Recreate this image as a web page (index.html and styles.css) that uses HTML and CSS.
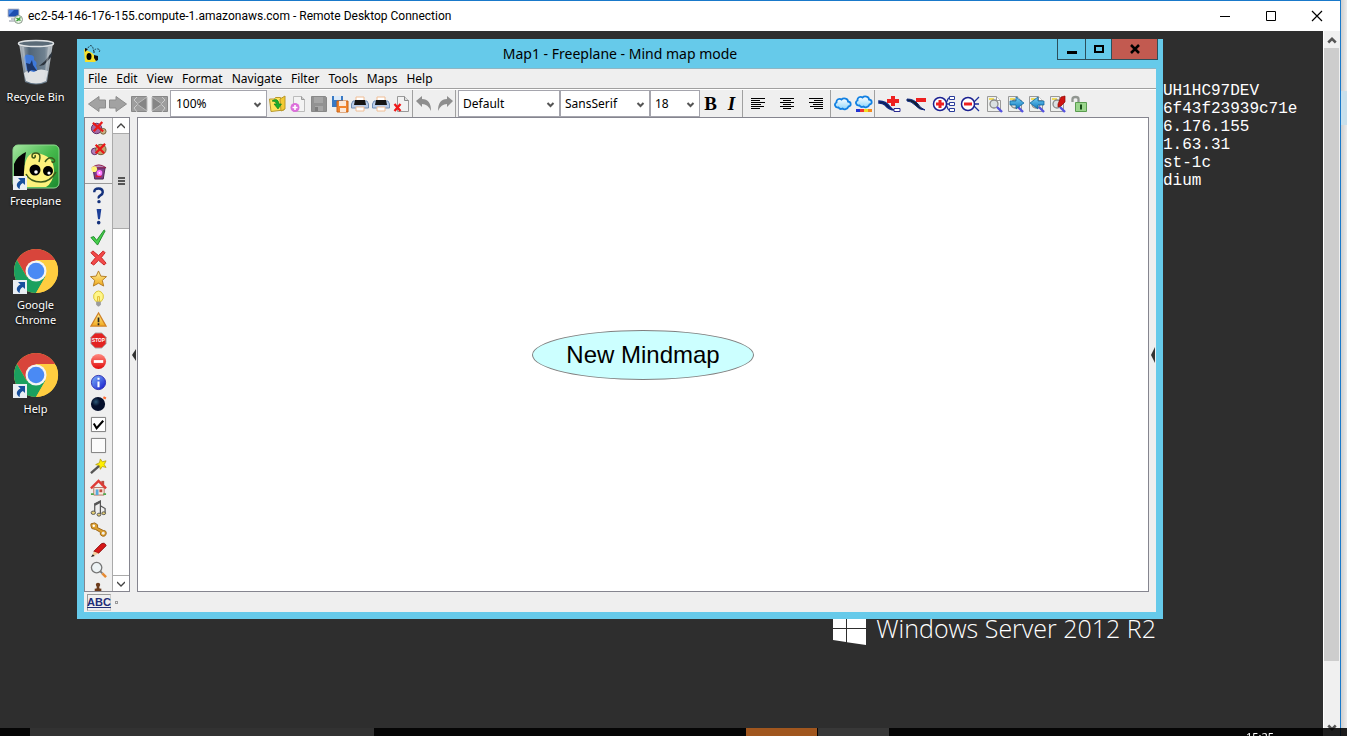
FILE: index.html
```
<!DOCTYPE html>
<html lang="en">
<head>
<meta charset="utf-8">
<title>Remote Desktop Connection</title>
<link rel="stylesheet" href="styles.css">
</head>
<body>
<svg class="defs" aria-hidden="true">
  <defs>
    <linearGradient id="gold" x2="0" y2="1"><stop offset="0" stop-color="#fff29a"/><stop offset="1" stop-color="#f0a81c"/></linearGradient>
    <linearGradient id="blue" x2="1" y2="1"><stop offset="0" stop-color="#7db9ff"/><stop offset="1" stop-color="#1313c8"/></linearGradient>
    <linearGradient id="red" x2="0" y2="1"><stop offset="0" stop-color="#ff8a80"/><stop offset="1" stop-color="#e00b0b"/></linearGradient>
    <linearGradient id="cyan" x2="0" y2="1"><stop offset="0" stop-color="#7ad0f5"/><stop offset="1" stop-color="#0d78bd"/></linearGradient>
    <linearGradient id="sky" x2="0" y2="1"><stop offset="0" stop-color="#ffffff"/><stop offset="1" stop-color="#8fd6fb"/></linearGradient>
    <linearGradient id="glass" x2="1"><stop offset="0" stop-color="#b9bfc4"/><stop offset=".3" stop-color="#506477"/><stop offset=".75" stop-color="#6f8190"/><stop offset="1" stop-color="#c6cacd"/></linearGradient>
    <linearGradient id="leaf" x2="1" y2="1"><stop offset="0" stop-color="#a6e6a1"/><stop offset=".5" stop-color="#45b94c"/><stop offset="1" stop-color="#1c8a2e"/></linearGradient>
    <radialGradient id="bombfill" cx=".35" cy=".35"><stop offset="0" stop-color="#2b5878"/><stop offset=".6" stop-color="#06102c"/></radialGradient>
  </defs>
  <symbol id="chev" viewBox="0 0 8 6"><path d="M1 1l3 3 3-3" fill="none" stroke="#555" stroke-width="2"/></symbol>
  <symbol id="thinup" viewBox="0 0 8 6"><path d="M0 5l4-4 4 4" fill="none" stroke="#444" stroke-width="1.3"/></symbol>
  <symbol id="printer" viewBox="0 0 18 18"><path d="M5 2h8v5H5z" fill="#fff" stroke="#f0bd94"/><path d="M2 6h14l1.500 3v4H.5V9z" fill="#b9cdea" stroke="#6f8db5"/><path d="M4 5h10l1 5H3z" fill="#151515"/><path d="M5 12h8v4H5z" fill="#fff" stroke="#f0bd94"/></symbol>
  <symbol id="pagelens" viewBox="0 0 18 18"><path d="M1.500 1.500h9l4 4v11h-13z" fill="#eef0ee" stroke="#999"/><path d="M3 3h5v2H3z" fill="#f0dc5c"/><path d="M10.500 1.500v4h4" fill="#fff" stroke="#999"/><circle cx="8" cy="9" r="4" fill="#d4dcdf" fill-opacity=".8" stroke="#8a8a8a" stroke-width="1.300"/><path d="M11 12l5 5" stroke="#5452df" stroke-width="2.400"/></symbol>
  <symbol id="cloud" viewBox="0 0 18 18"><path d="M4.500 12.500C.5 13 0 8.500 2.500 7.500 2 4.500 5.500 3 7.500 4.500 9.500 2.500 14 3.500 14 6.500c3.500.5 3.500 4.500.5 5-1 3-4.500 3.500-6 2-1.500.8-3 .5-4-1z" fill="url(#sky)" stroke="#1280e2" stroke-width="1.800"/></symbol>
  <symbol id="chrome" viewBox="0 0 48 48"><circle cx="24" cy="24" r="22" fill="#ffcd40"/><path d="M24 13h19.050A22 22 0 0 0 4.950 13L14.500 29.500z" fill="#d8453b"/><path d="M4.950 13A22 22 0 0 0 24 46l9.500-16.500H24L14.500 29.500z" fill="#1ba05f"/><path d="M24 14h19.700A22 22 0 0 1 24 46l9.500-16.500z" fill="#ffcd40"/><circle cx="24" cy="24" r="10.500" fill="#f4f4f4"/><circle cx="24" cy="24" r="8.300" fill="#4a8af4"/></symbol>
  <symbol id="short" viewBox="0 0 14 14"><path d="M0 0h14v14H0z" fill="#e9eef3"/><path d="M5 2l7 0v7L9.800 7C7 8.600 6.500 10.500 6.800 13 2.500 11 3 6.500 7.500 4.500z" fill="#174f9c"/></symbol>
</svg>

<div class="host">
  <section class="rdp">
    <header class="rdp-bar">
      <svg class="i16" viewBox="0 0 16 16"><path d="M1 1h11v8H1z" fill="#1d4fb0" stroke="#c3c7cf"/><path d="M2 2h5L2 7z" fill="#4e86e4"/><path d="M4 10h5v2H4zM2 12h8v2H2z" fill="#c5c9cf"/><circle cx="11.500" cy="11.500" r="4" fill="#e9f3e6" stroke="#8b9a8b"/><path d="M9.500 10l2 1.500-2 1.500M13.500 9.500l-2 1.500 2 1.500" fill="none" stroke="#2c9b2c" stroke-width="1.200"/></svg>
      <h1 class="rdp-title">ec2-54-146-176-155.compute-1.amazonaws.com - Remote Desktop Connection</h1>
      <div class="rdp-ctl">
        <button aria-label="Minimize"><svg viewBox="0 0 12 12"><path d="M1 6.500h10" stroke="#000"/></svg></button>
        <button aria-label="Maximize"><svg viewBox="0 0 12 12"><path d="M1.500 1.500h9v9h-9z" fill="none" stroke="#000"/></svg></button>
        <button aria-label="Close"><svg viewBox="0 0 12 12"><path d="M1 1l10 10M11 1L1 11" stroke="#000" stroke-width="1.200"/></svg></button>
      </div>
    </header>
    <div class="rdp-view">
      <main class="desktop">
        <nav class="shortcuts">
          <a href="#bin"><svg viewBox="0 0 48 48"><path d="M7 4l6 39q11 5 22 0l6-39z" fill="url(#glass)"/><path d="M12 34q5-4 11-2 6-3 13 0l-2 10q-10 5-20 0z" fill="#dfe1e3"/><path d="M12 19q1-5 6-3 5 0 4 5 4 2 2 6 3 4-2 6l-8-2-1-6z" fill="#3f79da"/><path d="M14 24l4 1 2-4 1 5 4 6-6-1-3 3z" fill="#1d3566"/><path d="M40 17l-8 9-5 1 6-5 7-9z" fill="#2c343d"/><path d="M11 8l4 32M37 8l-4 32" stroke="#d4dade" stroke-width="2" opacity=".4"/><ellipse cx="24" cy="4.500" rx="17.500" ry="3" fill="#5b6b78" stroke="#e1e4e6" stroke-width="1.500"/></svg><span>Recycle Bin</span></a>
          <a href="#freeplane"><svg viewBox="0 0 48 48"><rect y="2" x="1" width="46" height="43" rx="5" fill="url(#leaf)" stroke="#8fdc8f"/><path d="M2 21q3-8 12-12-3 14 0 29H2z" fill="#050505"/><path d="M12 44Q10 8 24 10q18 2 18 18-1 12-8 16z" fill="#fdf27c"/><circle cx="23" cy="27" r="5.500" fill="#000"/><circle cx="36" cy="28" r="5" fill="#000"/><circle cx="24" cy="29" r="1.800" fill="#fff"/><circle cx="37" cy="30" r="1.600" fill="#fff"/><path d="M14 31q4 8 15 8 9 0 15-10M27 19q3-9-3-9-4 0-4 3 0 2 2 2 2-1 1-3M33 19q3-5 7-4 4 2 2 4-2 1-2-1" fill="none" stroke="#3c5a1a" stroke-width="1.500"/><use href="#short" x="1" y="33" width="14" height="14"/></svg><span>Freeplane</span></a>
          <a href="#chrome-app"><svg viewBox="0 0 48 48"><use href="#chrome" width="48" height="48"/><use href="#short" x="1" y="33" width="14" height="14"/></svg><span>Google Chrome</span></a>
          <a href="#help"><svg viewBox="0 0 48 48"><use href="#chrome" width="48" height="48"/><use href="#short" x="1" y="33" width="14" height="14"/></svg><span>Help</span></a>
        </nav>

        <div class="hostinfo"><p>UH1HC97DEV</p><p>6f43f23939c71e</p><p>6.176.155</p><p>1.63.31</p><p>st-1c</p><p>dium</p></div>
        <div class="brand"><svg viewBox="0 0 33 34"><path d="M0 5l13-2v14H0zM14 3l19-3v17H14zM0 18h13v13L0 29zM14 18h19v16l-19-2.700z" fill="#fff"/></svg><span>Windows Server 2012 R2</span></div>

        <section class="win">
          <header class="win-bar">
            <svg class="bee" viewBox="0 0 18 18"><path d="M0 4l8 4 6 6-3 3H1z" fill="#f6df2a"/><path d="M1 3l3 1-3 3z" fill="#111"/><ellipse cx="5" cy="11.500" rx="2.500" ry="3.500" fill="#000"/><path d="M10 10l4 1v4l-2 1-2-3z" fill="#111"/><path d="M4 3q3-5 5 0l1 5M10 8q0-5 4-4 3 1 1 3" fill="none" stroke="#234450" stroke-dasharray="2 1"/></svg>
            <h2 class="win-title">Map1 - Freeplane - Mind map mode</h2>
            <div class="win-ctl">
              <button class="c-min" aria-label="Minimize"><svg viewBox="0 0 12 12"><path d="M1 8h10v3H1z"/></svg></button>
              <button class="c-max" aria-label="Maximize"><svg viewBox="0 0 12 12"><path d="M2 3h8v6H2z" fill="none" stroke="#000" stroke-width="2"/></svg></button>
              <button class="c-close" aria-label="Close"><svg viewBox="0 0 12 12"><path d="M2 2l8 8M10 2l-8 8" stroke="#000" stroke-width="2.500"/></svg></button>
            </div>
          </header>
          <div class="client">
            <nav class="menu"><button>File</button><button>Edit</button><button>View</button><button>Format</button><button>Navigate</button><button>Filter</button><button>Tools</button><button>Maps</button><button>Help</button></nav>
            <div class="tools">
              <div class="grp">
                <button aria-label="Previous"><svg viewBox="0 0 18 18"><path d="M.5 9L11 1.500V5h6.500v8H11v3.500z" fill="#a2a2a2" stroke="#8c8c8c"/></svg></button>
                <button aria-label="Next"><svg viewBox="0 0 18 18"><path d="M17.500 9L7 1.500V5H.5v8H7v3.500z" fill="#a2a2a2" stroke="#8c8c8c"/></svg></button>
                <button aria-label="First"><svg viewBox="0 0 18 18"><path d="M1.500 1.500h15v15h-15z" fill="#9d9d9d" stroke="#888"/><path d="M7 2L4 5l4 4-4 4 3 4" fill="none" stroke="#ccc"/><path d="M7 9l10-7v14z" fill="#858585" stroke="#bbb"/></svg></button>
                <button aria-label="Last"><svg viewBox="0 0 18 18"><path d="M1.500 1.500h15v15h-15z" fill="#9d9d9d" stroke="#888"/><path d="M11 2l3 3-4 4 4 4-3 4" fill="none" stroke="#ccc"/><path d="M11 9L1 2v14z" fill="#858585" stroke="#bbb"/></svg></button>
              </div>
              <label class="combo zoom"><select aria-label="Zoom"><option>100%</option></select><svg><use href="#chev"/></svg></label>
              <div class="grp edge io">
                <button aria-label="Open"><svg viewBox="0 0 18 18"><path d="M1.500 4h5l1-1.500h5V5h3.500v10l-13 1.500z" fill="#ffe45a" stroke="#b8972a"/><path d="M12 4l5-3v13l-4 2z" fill="#f4ca32" stroke="#b8972a"/><path d="M4 6q6-4 7 3h2.500L10 14 6 9h2.500Q8 6 4 6z" fill="#1cad2b" stroke="#0a7a1a" stroke-width=".6"/></svg></button>
                <button aria-label="New"><svg viewBox="0 0 18 18"><path d="M4.500 1.500h8l3 3v12h-11z" fill="#f3f3f3" stroke="#bbb"/><path d="M12.500 1.500v3h3" fill="#ccc" stroke="#999"/><circle cx="6" cy="12.500" r="4.500" fill="#dc6fdb"/><path d="M3.500 12.500h5M6 10v5" stroke="#fff" stroke-width="1.600"/></svg></button>
                <button aria-label="Save"><svg viewBox="0 0 18 18"><path d="M1.500 1.500h14l1 1v14h-15z" fill="#929292" stroke="#888"/><path d="M4 2h9v6H4zM5 11h8v5H5z" fill="#a6a6a6"/><path d="M5 12h3v4H5z" fill="#7d7d7d"/></svg></button>
                <button aria-label="Save as"><svg viewBox="0 0 18 18"><path d="M1 1h11v11H1z" fill="#3879c4"/><path d="M3 1h7v4H3z" fill="#dceaf8"/><path d="M6 6h11v11H6z" fill="#f2852e" stroke="#c96518"/><path d="M8 6h7v5H8zM9 13h6v4H9z" fill="#fbe8da"/></svg></button>
                <button aria-label="Print"><svg><use href="#printer"/></svg></button>
                <button aria-label="Print directly"><svg><use href="#printer"/></svg></button>
                <button aria-label="Close map"><svg viewBox="0 0 18 18"><path d="M4.500 1.500h7l4 4v11h-11z" fill="#f2f2f2" stroke="#999"/><path d="M11.500 1.500v4h4" fill="#ddd" stroke="#888"/><path d="M1.500 9l6 7M7.500 9l-6 7" stroke="#f01818" stroke-width="2.300"/></svg></button>
              </div>
              <div class="grp edge">
                <button aria-label="Undo"><svg viewBox="0 0 18 18"><path d="M1 6l6-5v3q9 0 9 12-3-7-9-7v3z" fill="#8e8e8e"/></svg></button>
                <button aria-label="Redo"><svg viewBox="0 0 18 18"><path d="M17 6l-6-5v3q-9 0-9 12 3-7 9-7v3z" fill="#8e8e8e"/></svg></button>
              </div>
              <i class="rule"></i>
              <label class="combo style"><select aria-label="Style"><option>Default</option></select><svg><use href="#chev"/></svg></label>
              <label class="combo font"><select aria-label="Font"><option>SansSerif</option></select><svg><use href="#chev"/></svg></label>
              <label class="combo size"><select aria-label="Size"><option>18</option></select><svg><use href="#chev"/></svg></label>
              <div class="grp edge"><button class="b">B</button><button class="b it">I</button></div>
              <div class="grp edge wide">
                <button aria-label="Align left"><svg viewBox="0 0 18 18"><path d="M2 3.500h14M2 5.500h9M2 7.500h14M2 9.500h10M2 11.500h13M2 13.500h9" stroke="#000"/></svg></button>
                <button aria-label="Centre"><svg viewBox="0 0 18 18"><path d="M2 3.500h14M5 5.500h8M2 7.500h14M5 9.500h8M2 11.500h14M5 13.500h8" stroke="#000"/></svg></button>
                <button aria-label="Align right"><svg viewBox="0 0 18 18"><path d="M2 3.500h14M7 5.500h9M2 7.500h14M6 9.500h10M3 11.500h13M7 13.500h9" stroke="#000"/></svg></button>
              </div>
              <div class="grp edge inset">
                <button aria-label="Cloud"><svg><use href="#cloud"/></svg></button>
                <button aria-label="Cloud colour"><svg viewBox="0 0 18 18"><use href="#cloud" y="-2" width="18" height="18"/><path d="M1 14h4v3H1z" fill="#2334d3"/><path d="M5 14h4v3H5z" fill="#e33"/><path d="M9 14h4v3H9z" fill="#f2de25"/><path d="M13 14h4v3h-4z" fill="#f58a1c"/></svg></button>
              </div>
              <div class="grp med inset">
                <button aria-label="New child"><svg viewBox="0 0 24 18"><path d="M1 6q7 0 11 6 2 3 5 3-6 0-10-5Q5 8 1 8z" fill="#123" stroke="#102880" stroke-width="1.500"/><path d="M13 1h4v3h4v4h-4v3h-4V8H9V4h4z" fill="#ee2020"/><path d="M16 13.500h6v3h-6z" fill="#fff" stroke="#2a2a90"/></svg></button>
                <button aria-label="Delete"><svg viewBox="0 0 24 18"><path d="M2 4q7 0 11 5 2 4 7 6-6 0-10-5Q6 6 2 6z" fill="#123" stroke="#102880"/><path d="M11 3h10v4H11z" fill="#ee2020"/></svg></button>
                <button aria-label="Unfold"><svg viewBox="0 0 24 18"><path d="M14 9h3M14 9q2-6 3-6h1M14 9q2 6 3 6h1" fill="none" stroke="#1c2f9c" stroke-width="1.300"/><path d="M17.500 1.500h5v3h-5zM17.500 7.500h5v3h-5zM17.500 13.500h5v3h-5z" fill="#fff" stroke="#2a3c9a"/><circle cx="8" cy="9" r="6.500" fill="#fff" stroke="#1b2090" stroke-width="1.500"/><path d="M6.500 5h3v2.500H12v3H9.500V13h-3v-2.500H4v-3h2.500z" fill="#ee2020"/></svg></button>
                <button aria-label="Fold"><svg viewBox="0 0 24 18"><path d="M14 8l6-6M14 9h6M14 10l6 6" stroke="#1c2f9c" stroke-width="1.300"/><circle cx="9" cy="9" r="6.500" fill="#fff" stroke="#1b2090" stroke-width="1.500"/><path d="M5 7.500h8v3H5z" fill="#ee2020"/></svg></button>
              </div>
              <div class="grp">
                <button aria-label="Find"><svg><use href="#pagelens"/></svg></button>
                <button aria-label="Find next"><svg viewBox="0 0 18 18"><use href="#pagelens" width="18" height="18"/><path d="M3 6h6V2l8 6-8 6v-4H3z" fill="url(#cyan)" stroke="#0a6098" stroke-width=".7"/></svg></button>
                <button aria-label="Find previous"><svg viewBox="0 0 18 18"><use href="#pagelens" width="18" height="18"/><path d="M16 6h-6V2L2 8l8 6v-4h6z" fill="url(#cyan)" stroke="#0a6098" stroke-width=".7"/></svg></button>
                <button aria-label="Find and replace"><svg viewBox="0 0 18 18"><use href="#pagelens" width="18" height="18"/><path d="M9 9l3-7 4-1v6l-4 4-3 1z" fill="#cf1310" stroke="#8e0805" stroke-width=".7"/></svg></button>
                <button aria-label="Lock"><svg viewBox="0 0 18 18"><path d="M2.500 7V4q0-2 3-2t3 2v4" fill="none" stroke="#919691" stroke-width="2.300"/><path d="M5.500 7.500h11v9h-11z" fill="#9bd68d" stroke="#5b9c50"/><path d="M10 9.500h2v5h-2z" fill="#174d17"/></svg></button>
              </div>
            </div>
            <div class="work">
              <aside class="palette">
                <div class="icons">
                  <button aria-label="Remove first icon"><svg viewBox="0 0 18 18"><circle cx="7" cy="9" r="5.500" fill="#a36aa5" stroke="#5a2a62"/><circle cx="14" cy="12" r="3" fill="#c9b487" stroke="#715b35"/><path d="M3 3l11 9M13 2L4 12" stroke="#ea1818" stroke-width="2.400"/></svg></button>
                  <button class="low" aria-label="Remove last icon"><svg viewBox="0 0 18 18"><circle cx="5" cy="11" r="3.500" fill="#b27db9" stroke="#5a2a62"/><circle cx="11.500" cy="9" r="5.500" fill="#c2a26c" stroke="#715b35"/><path d="M6 4l9 9M16 3L6 13" stroke="#ea1818" stroke-width="2.400"/></svg></button>
                  <button class="tall" aria-label="Remove all icons"><svg viewBox="0 0 18 18"><path d="M3 5h13l-2 12H5z" fill="#7d3f86" stroke="#4b2352"/><path d="M2 5q7-6 15 0z" fill="#b68abb" stroke="#8c1645"/><circle cx="4.500" cy="6.500" r="3" fill="#fff477"/><path d="M6 14h6" stroke="#db1a30" stroke-width="2"/><circle cx="10" cy="10.500" r="3" fill="#ff7bff"/><circle cx="10" cy="10.500" r="1" fill="#fff"/></svg></button>
                  <hr>
                  <button aria-label="Question"><svg viewBox="0 0 18 18"><path d="M4.500 5.500q0-4 4.500-4t4.500 4q0 2-2.500 3.300T9.500 12" fill="none" stroke="#14317c" stroke-width="2.600"/><circle cx="9.500" cy="15.500" r="1.800" fill="#14317c"/></svg></button>
                  <button aria-label="Important"><svg viewBox="0 0 18 18"><path d="M7 1h5l-1.500 11H8.500z" fill="#1c3f98"/><circle cx="9.200" cy="15.500" r="1.900" fill="#14317c"/></svg></button>
                  <button class="low" aria-label="OK"><svg viewBox="0 0 18 18"><path d="M1 9l3-1 3 4 8-11 1 1-8 15z" fill="#47cf4c" stroke="#1e8b2a"/></svg></button>
                  <button aria-label="Not OK"><svg viewBox="0 0 18 18"><path d="M1 4l2-2 6 5 5-5 2 2-4 5 5 6-2 2-6-5-5 5-3-2 5-6z" fill="#f24a4a" stroke="#c52222"/></svg></button>
                  <button class="low" aria-label="Excellent"><svg viewBox="0 0 18 18"><path d="M9 1l2.500 5.500 6 .5-4.500 4 1.500 6L9 14l-5.500 3L5 11 .5 7l6-.5z" fill="url(#gold)" stroke="#b37a22"/></svg></button>
                  <button aria-label="Idea"><svg viewBox="0 0 18 18"><path d="M6 12Q3 9 4 5q2-4 5-4t5 4q1 4-2 7z" fill="#fff68a" stroke="#d9c432"/><path d="M8 12V7h2v5" fill="none" stroke="#e0b92c"/><path d="M6.500 12.500h5v3l-2 2h-1l-2-2z" fill="#9b9b9b"/></svg></button>
                  <button aria-label="Warning"><svg viewBox="0 0 18 18"><path d="M9 2l8 14H1z" fill="url(#gold)" stroke="#d18226" stroke-width="1.300"/><path d="M9 7v5M9 13v2" stroke="#222" stroke-width="1.800"/></svg></button>
                  <button aria-label="Stop"><svg viewBox="0 0 18 18"><path d="M5.500 1h7L17 5.500v7L12.500 17h-7L1 12.500v-7z" fill="#e32222" stroke="#aaa"/><text x="9" y="11" class="stop">STOP</text></svg></button>
                  <button aria-label="No entry"><svg viewBox="0 0 18 18"><circle cx="9" cy="9" r="8" fill="url(#red)"/><path d="M4 7.500h10v3H4z" fill="#fff"/></svg></button>
                  <button aria-label="Information"><svg viewBox="0 0 18 18"><circle cx="9" cy="9" r="7.500" fill="url(#blue)" stroke="#2c2cb0"/><path d="M9 8v6M9 4v2.200" stroke="#fff" stroke-width="2.200"/></svg></button>
                  <button aria-label="Bomb"><svg viewBox="0 0 18 18"><circle cx="8.500" cy="9.500" r="7.500" fill="url(#bombfill)"/><path d="M15 4l1-2" stroke="#ff6a32" stroke-width="3"/></svg></button>
                  <button aria-label="Checked"><svg viewBox="0 0 18 18"><path d="M1.500 1.500h15v15h-15z" fill="#fff" stroke="#777"/><path d="M4 8l3 5 7-8" fill="none" stroke="#000" stroke-width="2.200"/></svg></button>
                  <button aria-label="Unchecked"><svg viewBox="0 0 18 18"><path d="M1.500 1.500h15v15h-15z" fill="#fbfbfb" stroke="#777"/></svg></button>
                  <button aria-label="Magic"><svg viewBox="0 0 18 18"><path d="M1 16l9-8" stroke="#555" stroke-width="2.500"/><path d="M11 1l2 3 4-1-2 4 2 3-4-1-2 3-1-4-4-1 4-2z" fill="#fff000" stroke="#b09a10" stroke-width=".8"/></svg></button>
                  <button aria-label="Home"><svg viewBox="0 0 18 18"><path d="M4 9h11v8H4z" fill="#f9e9dd" stroke="#b57464"/><path d="M12 2h3v5h-3z" fill="#b64f44"/><path d="M1 10l8-8 8 8" fill="none" stroke="#de3b36" stroke-width="2.500"/><path d="M6 11h3v6H6z" fill="#57a9dd"/><path d="M10 11h3v3h-3z" fill="#c24b3f"/><path d="M1 16h3M14 16h3" stroke="#49a849" stroke-width="2"/></svg></button>
                  <button aria-label="Music"><svg viewBox="0 0 18 18"><path d="M5 13V4l6-3v9M11 6l5 3v5M11 6v9" fill="none" stroke="#555" stroke-width="1.300"/><path d="M5 5l6-3" stroke="#555" stroke-width="2.200"/><ellipse cx="3.500" cy="13.500" rx="2.300" ry="1.800" fill="#e5cf74" stroke="#555"/><ellipse cx="9.500" cy="15.500" rx="2" ry="1.600" fill="#e5cf74" stroke="#555"/><ellipse cx="14.500" cy="14" rx="2" ry="1.500" fill="#e5cf74" stroke="#555"/></svg></button>
                  <button class="low" aria-label="Key"><svg viewBox="0 0 18 18"><path d="M1 3l4-1 3 2v3l6 3q4 0 3 4-1 3-4 2-3-1-2-4L6 9 2 8 1 5z" fill="#dda02f" stroke="#9c6414"/><circle cx="4" cy="5" r="1.300" fill="#fff"/><circle cx="14" cy="13" r="1.500" fill="#efefef"/></svg></button>
                  <button class="low" aria-label="Pencil"><svg viewBox="0 0 18 18"><path d="M4 11l8-8q4-2 5 2l-8 8z" fill="#d71717" stroke="#8c0b0b"/><path d="M4 11l5 2-7 4z" fill="#f5cf9c"/><path d="M1 17l2-3 2 2z" fill="#222"/></svg></button>
                  <button aria-label="Magnifier"><svg viewBox="0 0 18 18"><circle cx="7" cy="7" r="5.500" fill="#edf3f5" stroke="#777" stroke-width="1.400"/><path d="M11 11l2 2" stroke="#777" stroke-width="2"/><path d="M13 13l4 4" stroke="#e58a33" stroke-width="2.700"/></svg></button>
                  <button aria-label="Chess"><svg viewBox="0 0 18 18"><circle cx="8.500" cy="3" r="2.300" fill="#6d3c1d"/><path d="M7.500 4h2l1 5h-4z" fill="#6d3c1d"/><path d="M5 7h7v3H5z" fill="#6d3c1d"/></svg></button>
                </div>
                <div class="track">
                  <button aria-label="Scroll up"><svg><use href="#thinup"/></svg></button>
                  <div class="thumb"><i></i><i></i><i></i></div>
                  <button class="down" aria-label="Scroll down"><svg class="flip"><use href="#thinup"/></svg></button>
                </div>
              </aside>
              <button class="split" aria-label="Toggle icon bar"><svg viewBox="0 0 4 14"><path d="M4 1v12L0 7z" fill="#333"/></svg></button>
              <div class="canvas"><div class="node">New Mindmap</div></div>
              <button class="split right" aria-label="Toggle side panel"><svg viewBox="0 0 4 18"><path d="M4 1v16L0 9z" fill="#333"/></svg></button>
            </div>
            <footer class="status"><button class="abc">ABC</button><i></i></footer>
          </div>
        </section>
      </main>
      <div class="scroll">
        <button aria-label="Scroll up"><svg><use href="#chev"/></svg></button>
        <div class="bar"></div>
        <button class="down" aria-label="Scroll down"><svg><use href="#chev"/></svg></button>
      </div>
    </div>
  </section>
  <div class="behind"><i></i></div>
</div>
<footer class="taskbar"><i class="t1"></i><i class="t2"></i><i class="t3"></i><time>15:25</time></footer>
</body>
</html>
```
FILE: styles.css
```
* { box-sizing: border-box; }
body { margin: 0; font: 12px/16px "Noto Sans", sans-serif; overflow: hidden; color: #000; }
button { display: flex; align-items: center; justify-content: center; margin: 0; padding: 0; border: 0; background: none; font: inherit; color: inherit; }
h1, h2, p { margin: 0; font-weight: 400; }
.defs { position: absolute; width: 0; height: 0; }

.host { display: flex; height: 100vh; }
.rdp { flex: 1; display: flex; flex-direction: column; min-width: 0; border-top: 1px solid #1979ca; border-right: 1px solid #1979ca; background: #fff; }
.rdp-bar { display: flex; align-items: center; height: 30px; padding-left: 7px; gap: 5px; }
.i16 { width: 16px; height: 16px; }
.rdp-title { flex: 1; font: 12px/16px Roboto, sans-serif; }
.rdp-ctl { display: flex; }
.rdp-ctl button { width: 46px; height: 28px; }
.rdp-ctl svg { width: 12px; height: 12px; }
.rdp-view { flex: 1; display: flex; min-height: 0; }
.behind { width: 6px; padding-top: 91px; background: linear-gradient(90deg, #cfcfcf, #ececec); }
.behind i { display: block; height: 34px; background: #c9e0ec; }

.scroll { display: flex; flex-direction: column; width: 17px; border-left: 1px solid #fff; background: #f0f0f0; }
.scroll button { height: 17px; }
.scroll svg { width: 10px; height: 8px; }
.scroll button:first-child svg { transform: rotate(180deg); }
.scroll .bar { height: 87%; margin-right: 1px; background: #cdcdcd; }
.scroll .down { margin-top: auto; }

.desktop { position: relative; flex: 1; min-width: 0; background: #2e2e2e; color: #fff; overflow: hidden; }
.shortcuts { display: flex; flex-direction: column; width: 71px; padding-top: 8px; }
.shortcuts a { display: flex; flex-direction: column; align-items: center; gap: 2px; min-height: 104px; color: #fff; text-decoration: none; text-align: center; font-size: 11px; line-height: 15px; text-shadow: 0 1px 2px #000; }
.shortcuts svg { width: 48px; height: 48px; }
.shortcuts span { padding: 0 8px; margin: 0 -8px; }
.shortcuts a:nth-child(3) span { width: 70px; }

.hostinfo { position: absolute; left: 1163px; top: 51px; font: 16px/18px "Liberation Mono", monospace; }
.brand { position: absolute; right: 167px; bottom: 91px; display: flex; align-items: center; gap: 10px; font: 300 25px/34px "Open Sans", sans-serif; }
.brand svg { width: 33px; height: 34px; }
.taskbar { position: fixed; left: 0; right: 0; bottom: 0; display: flex; height: 8px; overflow: hidden; background: rgba(0, 0, 0, .88); color: #fff; }
.taskbar i { height: 8px; }
.t1 { width: 344px; margin-left: 30px; background: #323232; }
.t2 { width: 71px; margin-left: 372px; background: #a0561e; }
.t3 { width: 71px; margin-left: 1px; background: #383838; }
.taskbar time { margin-left: auto; margin-right: 73px; padding-top: 1px; font-size: 11px; }

.win { position: absolute; left: 77px; right: 160px; top: 8px; bottom: 117px; display: flex; flex-direction: column; padding: 0 7px 7px; background: #66caea; color: #000; }
.win-bar { display: grid; grid-template-columns: 1fr auto 1fr; align-items: center; height: 29px; flex: none; }
.bee { width: 18px; height: 18px; }
.win-title { font-size: 14px; line-height: 20px; }
.win-ctl { display: flex; justify-self: end; align-self: start; margin-right: -2px; border: 1px solid #2c4f5b; border-top: 0; }
.win-ctl button { height: 20px; width: 27px; }
.win-ctl svg { width: 12px; height: 12px; }
.win-ctl .c-max { width: 27px; border-left: 1px solid #2c4f5b; border-right: 1px solid #2c4f5b; }
.win-ctl .c-close { width: 45px; background: #c25a50; }
.client { flex: 1; display: flex; flex-direction: column; min-height: 0; background: #efefef; border-top: 1px solid #8fb6c4; }

.menu { display: flex; gap: 9px; height: 20px; padding-left: 4px; border-bottom: 1px solid #a0a0a0; }
.menu button { height: 19px; }
.tools { display: flex; height: 28px; border-top: 1px solid #fff; padding-left: 2px; }
.grp { display: flex; align-items: center; }
.grp button { width: 21px; height: 26px; }
.grp svg { width: 18px; height: 18px; }
.edge { border-right: 1px solid #a0a0a0; }
.io { width: 146px; }
.io button { flex: 1; min-width: 0; }
.io svg { flex: none; }
.inset { padding-left: 1px; }
.wide button { width: 29px; }
.med button { width: 27px; }
.med svg { width: 24px; }
.grp .b { font: bold 19px/20px "Liberation Serif", serif; }
.grp .it { font-style: italic; }
.rule { width: 2px; }
.combo { position: relative; display: block; border: 1px solid #a5a5ad; background: #fff; height: 27px; }
.combo select { width: 100%; height: 25px; padding: 0 0 0 5px; border: 0; background: transparent; appearance: none; font: 12px/16px "Noto Sans", sans-serif; color: #000; }
.combo svg { position: absolute; right: 4px; top: 11px; width: 9px; height: 6px; pointer-events: none; }
.zoom { width: 97px; }
.style { width: 102px; }
.font { width: 90px; }
.font select, .style select { padding-left: 4px; }
.size { width: 50px; }
.size select { padding-left: 4px; }

.work { flex: 1; display: flex; min-height: 0; }
.palette { display: flex; width: 46px; border: 1px solid #85858f; }
.icons { flex: 1; overflow: hidden; }
.icons button { width: 26px; height: 21px; }
.icons .low { height: 20px; }
.icons .tall { height: 24px; }
.icons svg { flex: none; width: 17px; height: 17px; }
.icons hr { margin: 0 0 1px; border: 0; border-top: 1px solid #999; }
.stop { font: bold 5px "Liberation Sans", sans-serif; fill: #fff; text-anchor: middle; }
.track { display: flex; flex-direction: column; width: 17px; background: #fff; border-left: 1px solid #aaa; }
.track button { height: 16px; border-bottom: 1px solid #aaa; }
.track .down { margin-top: auto; border-top: 1px solid #aaa; border-bottom: 0; }
.track svg { width: 8px; height: 6px; }
.track .flip { transform: rotate(180deg); }
.thumb { display: flex; flex-direction: column; align-items: center; justify-content: center; gap: 1px; height: 20%; background: #dadada; border-bottom: 1px solid #aaa; }
.thumb i { width: 7px; height: 2px; background: #555; }
.split { width: 7px; }
.split svg { width: 4px; height: 14px; }
.split.right svg { height: 18px; }
.canvas { flex: 1; display: flex; align-items: center; justify-content: center; background: #fff; border: 1px solid #85858f; }
.node { padding: 10px 33px; border: 1px solid #808080; border-radius: 50%; background: #cff; font: 24px/28px "Liberation Sans", sans-serif; color: #000; white-space: nowrap; }
.status { display: flex; align-items: center; gap: 4px; height: 20px; padding-left: 3px; }
.status i { width: 3px; height: 3px; border: 1px solid #999; }
.abc { width: 24px; height: 17px; border: 1px solid #999; border-right-color: #ccc; border-bottom-color: #ccc; font: 11px/14px "Liberation Sans", sans-serif; font-weight: 700; color: #1e2d78; text-decoration: underline; }
```
